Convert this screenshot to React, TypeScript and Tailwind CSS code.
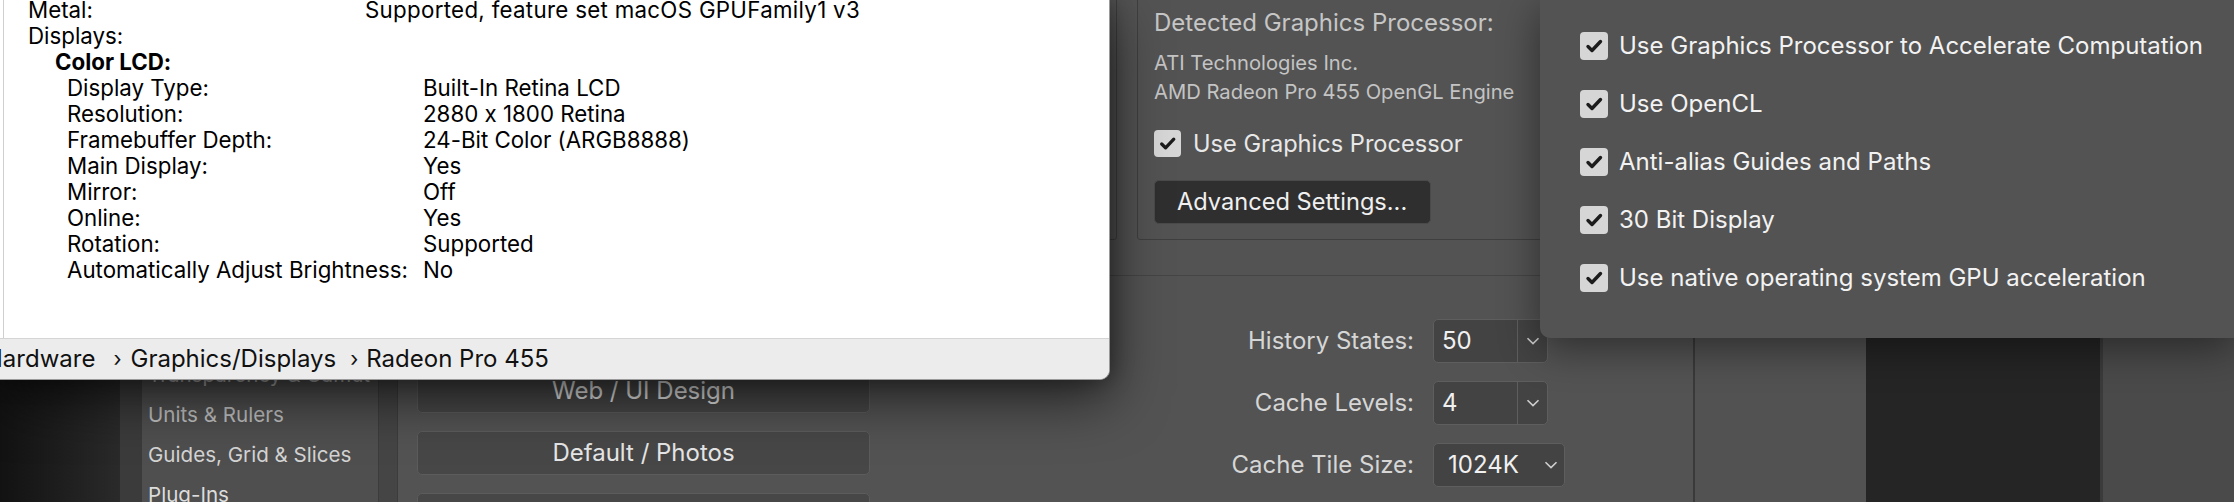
import React from "react";

function Check({ size = 28 }: { size?: number }) {
  return (
    <span
      className="flex shrink-0 items-center justify-center rounded-[4px] bg-[#d6d6d6]"
      style={{ width: size, height: size }}
    >
      <svg width={size} height={size} viewBox="0 0 28 28">
        <polyline
          points="8,14.5 12,18.5 20.5,9.5"
          fill="none"
          stroke="#1c1c1c"
          strokeWidth="3.4"
          strokeLinecap="round"
          strokeLinejoin="round"
        />
      </svg>
    </span>
  );
}

function Chevron() {
  return (
    <svg width="14" height="8" viewBox="0 0 14 8">
      <polyline points="1.5,1.2 7,6.6 12.5,1.2" fill="none" stroke="#cfcfcf" strokeWidth="1.6" />
    </svg>
  );
}

const infoRows: { label: string; value?: string; level: number; bold?: boolean }[] = [
  { label: "Metal:", value: "Supported, feature set macOS GPUFamily1 v3", level: 0 },
  { label: "Displays:", level: 0 },
  { label: "Color LCD:", level: 1, bold: true },
  { label: "Display Type:", value: "Built-In Retina LCD", level: 2 },
  { label: "Resolution:", value: "2880 x 1800 Retina", level: 2 },
  { label: "Framebuffer Depth:", value: "24-Bit Color (ARGB8888)", level: 2 },
  { label: "Main Display:", value: "Yes", level: 2 },
  { label: "Mirror:", value: "Off", level: 2 },
  { label: "Online:", value: "Yes", level: 2 },
  { label: "Rotation:", value: "Supported", level: 2 },
  { label: "Automatically Adjust Brightness:", value: "No", level: 2 },
];

function InfoRow({ r }: { r: (typeof infoRows)[number] }) {
  if (r.level === 0) {
    return (
      <div className="flex h-[26px] shrink-0 items-center pl-[24px]">
        <span className="w-[337px] shrink-0">{r.label}</span>
        {r.value && <span className="tracking-[0.3px]">{r.value}</span>}
      </div>
    );
  }
  if (r.level === 1) {
    return (
      <div className="flex h-[26px] shrink-0 items-center pl-[51px] font-bold">
        <span>{r.label}</span>
      </div>
    );
  }
  return (
    <div className="flex h-[26px] shrink-0 items-center pl-[63px]">
      <span className="w-[356px] shrink-0">{r.label}</span>
      <span>{r.value}</span>
    </div>
  );
}

const sidebarItems = ["Transparency & Gamut", "Units & Rulers", "Guides, Grid & Slices", "Plug-Ins", "Type"];
const sidebarColors = ["text-[#b0b0b0]", "text-[#c0c0c0]", "text-[#d4d4d4]", "text-[#dcdcdc]", "text-[#dcdcdc]"];

const advanced = [
  "Use Graphics Processor to Accelerate Computation",
  "Use OpenCL",
  "Anti-alias Guides and Paths",
  "30 Bit Display",
  "Use native operating system GPU acceleration",
];

export default function App() {
  return (
    <div className="relative flex h-[502px] w-[2234px] overflow-hidden bg-[#535353] font-['Inter',sans-serif] [font-feature-settings:'calt'_0]">
      {/* desktop at far left */}
      <div className="h-full w-[120px] shrink-0 bg-linear-to-r from-[#121212] to-[#2a2a2a]" />

      {/* Photoshop preferences dialog */}
      <div className="flex h-full w-[1573px] shrink-0 bg-[#535353]">
        <div className="h-full w-[22px] shrink-0 bg-[#3b3b3b]" />
        <div className="flex h-full w-[236px] shrink-0 flex-col overflow-hidden bg-[#4f4f4f] pt-[355px] pl-[6px]">
          {sidebarItems.map((s, i) => (
            <div key={s} className={`flex h-[40px] shrink-0 items-center text-[20.6px] ${sidebarColors[i]}`}>
              {s}
            </div>
          ))}
        </div>
        <div className="h-full w-[20px] shrink-0 border-x border-[#3c3c3c] bg-[#454545]" />
        <div className="flex min-w-0 flex-1 flex-col">
          {/* top section */}
          <div className="flex h-[275px] shrink-0 gap-[20px] pl-[19px]">
            <div className="mt-[-20px] h-[260px] w-[700px] shrink-0 rounded-[3px] border border-[#3f3f3f]" />
            <div className="mt-[-20px] flex h-[260px] w-[540px] shrink-0 flex-col rounded-[3px] border border-[#3f3f3f] pt-[27px] pl-[16px]">
              <div className="text-[24px] leading-[30px] text-[#c6c6c6]">Detected Graphics Processor:</div>
              <div className="mt-[10px] text-[20.2px] leading-[29px] text-[#c4c4c4]">
                <div>ATI Technologies Inc.</div>
                <div>AMD Radeon Pro 455 OpenGL Engine</div>
              </div>
              <div className="mt-[24px] flex h-[27px] items-center gap-[12px] text-[23.6px] text-[#e8e8e8]">
                <Check size={27} />
                <span>Use Graphics Processor</span>
              </div>
              <div className="mt-[23px] flex h-[44px] w-[277px] items-center rounded-[5px] border border-[#4a4a4a] bg-[#2f2f2f] pl-[22px] text-[23.6px] text-[#f0f0f0]">
                Advanced Settings...
              </div>
            </div>
          </div>
          {/* bottom section: history & cache */}
          <div className="flex flex-1 border-t border-[#454545] pl-[19px]">
            <div className="flex w-[453px] shrink-0 flex-col gap-[18px] pt-[93px]">
              {["Web / UI Design", "Default / Photos", "Huge Pixel Dimensions"].map((b) => (
                <div
                  key={b}
                  className="flex h-[44px] shrink-0 items-center justify-center rounded-[5px] border border-[#5c5c5c] bg-[#474747] text-[24px] text-[#e6e6e6]"
                >
                  {b}
                </div>
              ))}
            </div>
            <div className="flex flex-col gap-[18px] pt-[43px]">
              <div className="flex h-[44px] shrink-0 items-center">
                <span className="w-[544px] text-right text-[24px] text-[#d6d6d6]">History States:</span>
                <div className="ml-[19px] flex h-[44px] w-[115px] items-stretch rounded-[5px] border-[1.5px] border-[#5e5e5e] bg-[#434343]">
                  <span className="flex w-[84px] items-center border-r-[1.5px] border-[#5e5e5e] pl-[8px] text-[24px] text-[#f0f0f0]">50</span>
                  <span className="flex flex-1 items-center justify-center">
                    <Chevron />
                  </span>
                </div>
              </div>
              <div className="flex h-[44px] shrink-0 items-center">
                <span className="w-[544px] text-right text-[24px] text-[#d6d6d6]">Cache Levels:</span>
                <div className="ml-[19px] flex h-[44px] w-[115px] items-stretch rounded-[5px] border-[1.5px] border-[#5e5e5e] bg-[#434343]">
                  <span className="flex w-[84px] items-center border-r-[1.5px] border-[#5e5e5e] pl-[8px] text-[24px] text-[#f0f0f0]">4</span>
                  <span className="flex flex-1 items-center justify-center">
                    <Chevron />
                  </span>
                </div>
              </div>
              <div className="flex h-[44px] shrink-0 items-center">
                <span className="w-[544px] text-right text-[24px] text-[#d6d6d6]">Cache Tile Size:</span>
                <div className="ml-[19px] flex h-[44px] w-[132px] items-center justify-between rounded-[5px] border-[1.5px] border-[#5e5e5e] bg-[#434343] pr-[6px] pl-[14px]">
                  <span className="text-[24px] text-[#f0f0f0]">1024K</span>
                  <Chevron />
                </div>
              </div>
            </div>
          </div>
        </div>
      </div>

      {/* workspace panels at right */}
      <div className="h-full w-[2px] shrink-0 bg-[#3a3a3a]" />
      <div className="h-full w-[171px] shrink-0 bg-[#525252]" />
      <div className="h-full w-[234px] shrink-0 bg-[#252525]" />
      <div className="h-full w-[3px] shrink-0 bg-[#3b3b3b]" />
      <div className="h-full w-[131px] shrink-0 bg-[#4a4a4a]" />

      {/* System Information window (overlaps) */}
      <div className="absolute top-0 left-0 flex h-[380px] w-[1110px] flex-col overflow-hidden rounded-br-[10px] border-r border-b border-[#9a9a9a] bg-white text-[22.3px] text-black shadow-[0_18px_55px_rgba(0,0,0,0.6),0_0_22px_rgba(0,0,0,0.35)]">
        <div className="ml-[3px] h-[338px] shrink-0 overflow-hidden border-l border-[#cfcfcf]">
          <div className="mt-[-3px] flex flex-col leading-[26px]">
            {infoRows.map((r) => (
              <InfoRow key={r.label} r={r} />
            ))}
          </div>
        </div>
        <div className="flex flex-1 items-center border-t border-[#d4d4d4] bg-[#ececec] text-[24px] text-[#111]">
          <span className="ml-[-15px]">Hardware</span>
          <span className="ml-[18px] text-[21px]">›</span>
          <span className="ml-[9px]">Graphics/Displays</span>
          <span className="ml-[14px] text-[21px]">›</span>
          <span className="ml-[8px]">Radeon Pro 455</span>
        </div>
      </div>

      {/* GPU Advanced settings sheet (overlaps) */}
      <div className="absolute top-0 left-[1540px] flex h-[338px] w-[694px] flex-col gap-[30px] rounded-bl-[10px] bg-[#535353] pt-[32px] pl-[40px] shadow-[0_10px_40px_rgba(0,0,0,0.45)]">
        {advanced.map((a) => (
          <div key={a} className="flex h-[28px] shrink-0 items-center gap-[11px] text-[24px] text-[#f2f2f2]">
            <Check size={28} />
            <span>{a}</span>
          </div>
        ))}
      </div>
    </div>
  );
}
